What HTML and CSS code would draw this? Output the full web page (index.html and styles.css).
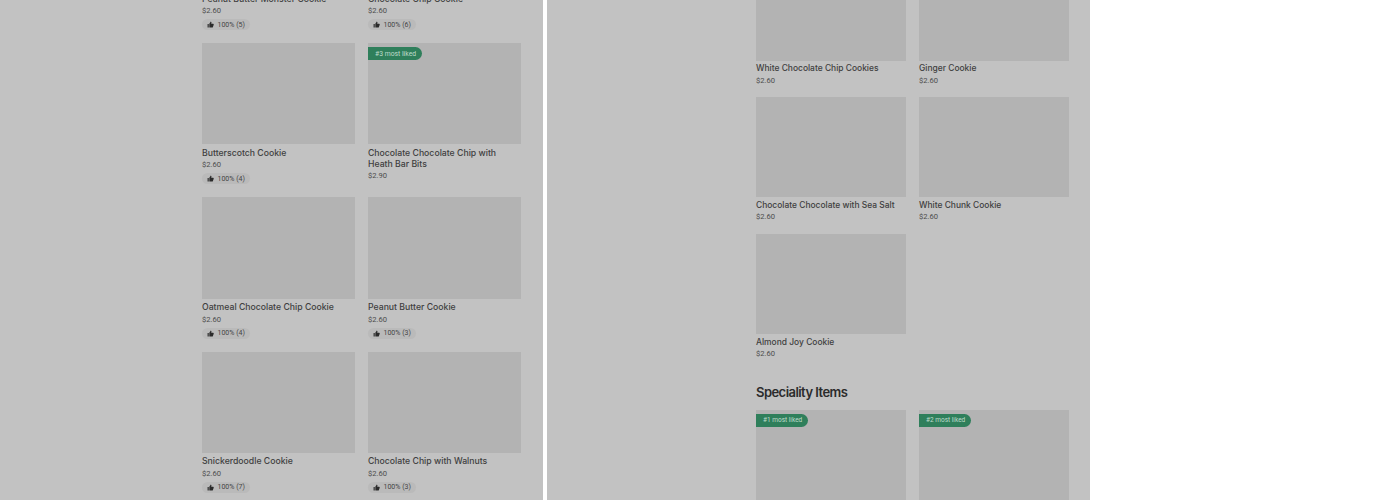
FILE: index.html
```html
<!DOCTYPE html>
<html lang="en">
<head>
<meta charset="utf-8">
<title>Menu</title>
<link rel="stylesheet" href="styles.css">
</head>
<body>
<svg class="sprite" width="0" height="0"><symbol id="thumb" viewBox="0 0 24 24"><path d="M2 10h4v12H2zM8 22V9.500l5-7.500 1.600 1.100c.6.400.8 1.100.7 1.800L14.500 9H21c1.100 0 2 .9 2 2v2l-3 8c-.3.600-.9 1-1.600 1z"/></symbol></svg>
<main class="stage">
  <section class="pane pane-left">
    <div class="grid grid-left">
      <article class="card"><div class="tile"></div><h3 class="name">Peanut Butter Monster Cookie</h3><p class="price">$2.60</p><div class="chip"><svg class="thumb"><use href="#thumb"/></svg>100% (5)</div></article>
      <article class="card"><div class="tile"></div><h3 class="name">Chocolate Chip Cookie</h3><p class="price">$2.60</p><div class="chip"><svg class="thumb"><use href="#thumb"/></svg>100% (6)</div></article>
      <article class="card"><div class="tile"></div><h3 class="name">Butterscotch Cookie</h3><p class="price">$2.60</p><div class="chip"><svg class="thumb"><use href="#thumb"/></svg>100% (4)</div></article>
      <article class="card"><div class="tile"><span class="badge">#3 most liked</span></div><h3 class="name">Chocolate Chocolate Chip with Heath Bar Bits</h3><p class="price">$2.90</p></article>
      <article class="card"><div class="tile"></div><h3 class="name">Oatmeal Chocolate Chip Cookie</h3><p class="price">$2.60</p><div class="chip"><svg class="thumb"><use href="#thumb"/></svg>100% (4)</div></article>
      <article class="card"><div class="tile"></div><h3 class="name">Peanut Butter Cookie</h3><p class="price">$2.60</p><div class="chip"><svg class="thumb"><use href="#thumb"/></svg>100% (3)</div></article>
      <article class="card"><div class="tile"></div><h3 class="name">Snickerdoodle Cookie</h3><p class="price">$2.60</p><div class="chip"><svg class="thumb"><use href="#thumb"/></svg>100% (7)</div></article>
      <article class="card"><div class="tile"></div><h3 class="name">Chocolate Chip with Walnuts</h3><p class="price">$2.60</p><div class="chip"><svg class="thumb"><use href="#thumb"/></svg>100% (3)</div></article>
    </div>
  </section>
  <section class="pane pane-right">
    <div class="grid grid-right">
      <article class="card"><div class="tile"></div><h3 class="name">White Chocolate Chip Cookies</h3><p class="price">$2.60</p></article>
      <article class="card"><div class="tile"></div><h3 class="name">Ginger Cookie</h3><p class="price">$2.60</p></article>
      <article class="card"><div class="tile"></div><h3 class="name">Chocolate Chocolate with Sea Salt</h3><p class="price">$2.60</p></article>
      <article class="card"><div class="tile"></div><h3 class="name">White Chunk Cookie</h3><p class="price">$2.60</p></article>
      <article class="card"><div class="tile"></div><h3 class="name">Almond Joy Cookie</h3><p class="price">$2.60</p></article>
    </div>
    <h2 class="heading">Speciality Items</h2>
    <div class="grid grid-special">
      <article class="card"><div class="tile"><span class="badge">#1 most liked</span></div></article>
      <article class="card"><div class="tile"><span class="badge">#2 most liked</span></div></article>
    </div>
  </section>
</main>
</body>
</html>
```
FILE: styles.css
```css
* { box-sizing: border-box; }
html, body { margin: 0; height: 500px; overflow: hidden; background: #fff; }
body { font-family: Inter, "Liberation Sans", sans-serif; color: #333; }
.sprite { display: block; }
.stage { display: flex; gap: 4px; height: 500px; }
.pane { width: 543px; height: 500px; overflow: hidden; background: #c2c2c2; flex: none; }
.pane-left { padding-left: 202px; }
.pane-right { padding-left: 209px; }
.grid { display: grid; column-gap: 13px; }
.grid-left { grid-template-columns: 153px 153px; row-gap: 13px; margin-top: -111.2px; }
.grid-right { grid-template-columns: 150px 150px; row-gap: 11.05px; margin-top: -39.4px; }
.tile { position: relative; height: 100px; background: #b3b3b3; }
.grid-left .tile { height: 101.3px; }
.name { margin: 2.6px 0 0; font-size: 8.45px; line-height: 11px; font-weight: 500; color: #404040; }
.price { margin: 0.55px 0 0; font-family: Roboto, sans-serif; font-size: 7.6px; line-height: 11.5px; color: #4d4d4d; }
.grid-left .name { margin-top: 3.4px; font-size: 8.7px; }
.grid-left .price { margin-top: 0.5px; }
.chip { display: flex; width: fit-content; align-items: center; gap: 3.5px; height: 11px; margin-top: 2.6px; padding: 0 5px; border-radius: 5.5px; background: #bababa; font-family: Roboto, sans-serif; font-size: 7px; color: #454545; }
.thumb { width: 7px; height: 7px; fill: #2b2b2b; flex: none; }
.badge { position: absolute; left: 0; top: 4.2px; display: flex; align-items: center; height: 13px; padding: 0 6px 0 7px; border-radius: 0 7px 7px 0; background: #2f7f5b; color: #bfdccc; font-family: Roboto, sans-serif; font-size: 6.8px; white-space: nowrap; }
.grid-right .badge, .grid-special .badge { padding-right: 5.5px; font-size: 6.5px; }
.heading { margin: 23.65px 0 8.5px; font-size: 13px; line-height: 18px; font-weight: 600; letter-spacing: -0.55px; color: #2b2b2b; }
.grid-special { grid-template-columns: 150px 150px; }
```
